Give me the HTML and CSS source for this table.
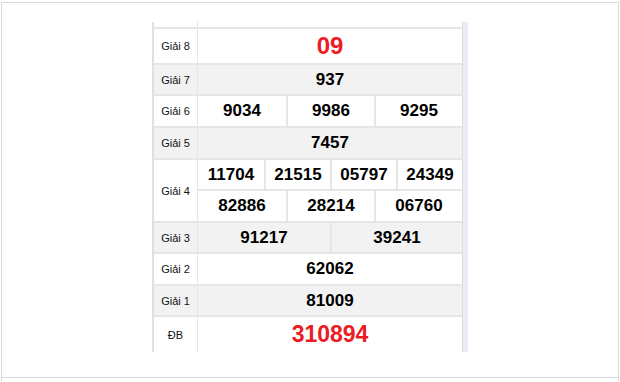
FILE: index.html
```html
<!DOCTYPE html>
<html lang="vi">
<head>
<meta charset="utf-8">
<title>Kết quả xổ số</title>
<link rel="stylesheet" href="styles.css">
</head>
<body>
<div class="frame">
  <div class="main">
    <div class="box">
      <div class="scroll">
        <div class="row stub"><div class="lbl"></div><div class="nums"></div></div>
        <div class="row r8">
          <div class="lbl">Giải 8</div>
          <div class="nums"><div class="sub c1"><div class="cell red">09</div></div></div>
        </div>
        <div class="row r7 alt">
          <div class="lbl">Giải 7</div>
          <div class="nums"><div class="sub c1"><div class="cell">937</div></div></div>
        </div>
        <div class="row r6">
          <div class="lbl">Giải 6</div>
          <div class="nums"><div class="sub c3"><div class="cell">9034</div><div class="cell">9986</div><div class="cell">9295</div></div></div>
        </div>
        <div class="row r5 alt">
          <div class="lbl">Giải 5</div>
          <div class="nums"><div class="sub c1"><div class="cell">7457</div></div></div>
        </div>
        <div class="row r4">
          <div class="lbl">Giải 4</div>
          <div class="nums">
            <div class="sub c4 s1"><div class="cell">11704</div><div class="cell">21515</div><div class="cell">05797</div><div class="cell">24349</div></div>
            <div class="sub c3 s2"><div class="cell">82886</div><div class="cell">28214</div><div class="cell">06760</div></div>
          </div>
        </div>
        <div class="row r3 alt">
          <div class="lbl">Giải 3</div>
          <div class="nums"><div class="sub c2"><div class="cell">91217</div><div class="cell">39241</div></div></div>
        </div>
        <div class="row r2">
          <div class="lbl">Giải 2</div>
          <div class="nums"><div class="sub c1"><div class="cell">62062</div></div></div>
        </div>
        <div class="row r1 alt">
          <div class="lbl">Giải 1</div>
          <div class="nums"><div class="sub c1"><div class="cell">81009</div></div></div>
        </div>
        <div class="row rdb">
          <div class="lbl">ĐB</div>
          <div class="nums"><div class="sub c1"><div class="cell red db">310894</div></div></div>
        </div>
      </div>
      <div class="bar"></div>
    </div>
  </div>
  <div class="foot"></div>
</div>
</body>
</html>
```

FILE: styles.css
```css
html, body {
  margin: 0;
  padding: 0;
  background: #ffffff;
  overflow: hidden;
}
body {
  font-family: "Liberation Sans", Arial, sans-serif;
}
.frame {
  margin: 2px 1px 0 1px;
  border: 1px solid #d9d9d9;
  border-bottom: none;
  height: 379px;
  box-sizing: border-box;
}
.main {
  height: 374px;
  box-sizing: border-box;
  padding-top: 19px;
  display: flex;
  justify-content: center;
}
.foot {
  border-top: 1px solid #d9d9d9;
}
.box {
  display: flex;
  height: 330px;
}
.scroll {
  width: 310px;
  box-sizing: border-box;
  overflow: hidden;
  border-left: 2px solid #e0e0e0;
}
.bar {
  width: 6px;
  box-sizing: border-box;
  background: #e8ecf5;
  border-left: 1px solid #dedede;
}
.row {
  display: flex;
  border-top: 2px solid #e6e6e6;
}
.row.stub {
  border-top: none;
  height: 5px;
}
.alt {
  background: #f2f2f2;
}
.lbl {
  width: 43px;
  flex: none;
  border-right: 1px solid #e6e6e6;
  display: flex;
  align-items: center;
  justify-content: center;
  font-size: 11px;
  color: #111111;
}
.nums {
  flex: 1;
  display: flex;
  flex-direction: column;
}
.sub {
  display: grid;
  flex: 1;
}
.sub + .sub {
  border-top: 2px solid #e6e6e6;
}
.c1 { grid-template-columns: 1fr; }
.c2 { grid-template-columns: 1fr 1fr; }
.c3 { grid-template-columns: 1fr 1fr 1fr; }
.c4 { grid-template-columns: 1fr 1fr 1fr 1fr; }
.cell {
  display: flex;
  align-items: center;
  justify-content: center;
  font-weight: bold;
  font-size: 17px;
  color: #000000;
}
.cell + .cell {
  border-left: 2px solid #e6e6e6;
}
.cell.red {
  color: #ec1c24;
  font-size: 24px;
}
.cell.db {
  font-size: 23px;
}
.r8 { height: 34px; }
.r7 { height: 29px; }
.r6 { height: 30px; }
.r5 { height: 30px; }
.r4 { height: 61px; }
.s1 { flex: none; height: 29px; }
.s2 { flex: none; height: 30px; }
.r3 { height: 29px; }
.r2 { height: 30px; }
.r1 { height: 29px; }
.rdb { height: 35px; }
```
